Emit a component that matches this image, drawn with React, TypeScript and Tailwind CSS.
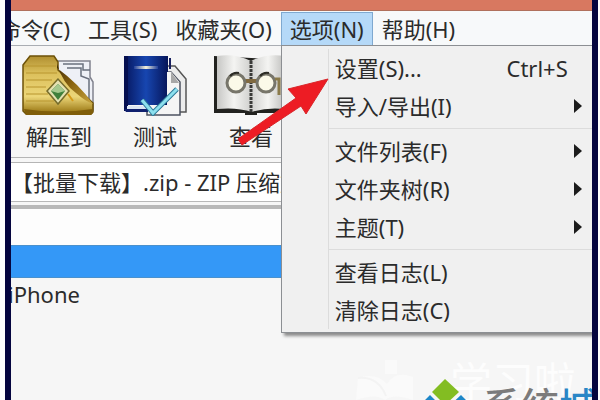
import React from "react";
import clsx from "clsx";

interface Entry {
  label: string;
  shortcut?: string;
  sub?: boolean;
}

const menus = ["命令(C)", "工具(S)", "收藏夹(O)", "选项(N)", "帮助(H)"];

const groups: Entry[][] = [
  [
    { label: "设置(S)...", shortcut: "Ctrl+S" },
    { label: "导入/导出(I)", sub: true },
  ],
  [
    { label: "文件列表(F)", sub: true },
    { label: "文件夹树(R)", sub: true },
    { label: "主题(T)", sub: true },
  ],
  [{ label: "查看日志(L)" }, { label: "清除日志(C)" }],
];

function FolderIcon() {
  return (
    <svg width="76" height="64" viewBox="0 0 76 64" aria-hidden="true">
      <defs>
        <linearGradient id="gold" x1="0" y1="0" x2="0" y2="1">
          <stop offset="0" stopColor="#b08f30" />
          <stop offset="0.3" stopColor="#dcc05c" />
          <stop offset="0.7" stopColor="#ecd678" />
          <stop offset="1" stopColor="#94700c" />
        </linearGradient>
        <linearGradient id="flap" x1="0" y1="0" x2="1" y2="1">
          <stop offset="0" stopColor="#3f2a04" />
          <stop offset="0.45" stopColor="#8a6410" />
          <stop offset="1" stopColor="#c9a640" />
        </linearGradient>
      </defs>
      <path d="M36 9h33v16l3 5v28H40z" fill="#eef0f6" stroke="#81838e" strokeWidth="1.5" />
      <path d="M42 12h20v6h7M46 16h14v8l8 3v22" fill="none" stroke="#6a707e" strokeWidth="1.5" />
      <path d="M2 13 9 4h24l4 6v8l35 33v9l-2 2H5l-3-3z" fill="url(#gold)" stroke="#6d5208" strokeWidth="1.5" />
      <path d="M36 12q6 20 19 29 9 8 17 11-14-20-36-36z" fill="url(#flap)" />
      <path d="M3 14h32M5 21h31M5 28h26M5 35h20M5 42h22M5 49h28" stroke="#b8952e" strokeWidth="1" />
      <path d="M3 57q34 5 69 0v4l-2 2H5z" fill="#805e0a" />
      <path d="M37 27 26 39l11 13 11-13z" fill="#e4e2b2" stroke="#766c2b" strokeWidth="1.5" />
      <path d="m30 39 7-7 7 7-7 9z" fill="#3f803c" />
      <path d="m30 39 7 2 7-2-7-7z" fill="#a5c98e" />
      <path d="m47 42 5 7" stroke="#d59b1a" strokeWidth="2" />
    </svg>
  );
}

function TestIcon() {
  return (
    <svg width="66" height="64" viewBox="0 0 66 64" aria-hidden="true">
      <defs>
        <linearGradient id="cover">
          <stop offset="0" stopColor="#06165e" />
          <stop offset="0.5" stopColor="#1746b0" />
          <stop offset="1" stopColor="#061559" />
        </linearGradient>
        <linearGradient id="shine">
          <stop offset="0" stopColor="#22409a" />
          <stop offset="0.5" stopColor="#f4f2dc" />
          <stop offset="1" stopColor="#22409a" />
        </linearGradient>
      </defs>
      <path d="M44 14h9l11 13v33H44z" fill="#ececec" stroke="#555" strokeWidth="1.5" />
      <path d="M39 20h10l9 10v33H25V49h14z" fill="#f5f5f5" stroke="#4c5260" strokeWidth="1.5" />
      <path d="M49 20v11h9" fill="#bbb" stroke="#777" />
      <path d="M2 4h44v17h-1v32H2z" fill="url(#cover)" />
      <path d="M45 20h4l8 10v32H26V53h19z" fill="#f5f5f5" />
      <path d="M49 20v11h8z" fill="#a8a8a8" />
      <path d="M2 4h4v55H2z" fill="#050f50" />
      <path d="M5 54h22v3H5z" fill="#dce6f3" />
      <path d="M2 57h24v3H4z" fill="#10206e" />
      <path d="M48 6v11" stroke="#18205f" strokeWidth="2" />
      <path d="M12 14h24v3H12z" fill="url(#shine)" />
      <path d="m20 48 11 13 24-24" fill="none" stroke="#2a7898" strokeWidth="5" />
      <path d="m20 48 11 13 24-24" fill="none" stroke="#8de0ee" strokeWidth="3" />
    </svg>
  );
}

function ViewIcon() {
  return (
    <svg width="76" height="64" viewBox="0 0 76 64" aria-hidden="true">
      <defs>
        <linearGradient id="page">
          <stop offset="0" stopColor="#c7c7c5" />
          <stop offset="0.25" stopColor="#f4f4f2" />
          <stop offset="0.5" stopColor="#d0d0ce" />
          <stop offset="0.75" stopColor="#f4f4f2" />
          <stop offset="1" stopColor="#bdbdbb" />
        </linearGradient>
      </defs>
      <path d="M1 4v57h31v2h12v-2h28V8z" fill="#22221f" />
      <path d="M4 4q18-3 34 5Q54 1 72 4v53q-18-2-33 3-15-5-35-3z" fill="url(#page)" />
      <path d="M38 9v51" stroke="#3a3a38" strokeWidth="3" strokeDasharray="3 1" />
      <path d="M32 29h12" stroke="#80693f" strokeWidth="4" />
      <circle cx="23" cy="31" r="9" fill="#fbf9e8" stroke="#77756a" strokeWidth="3" />
      <circle cx="53" cy="31" r="9" fill="#fbf9e8" stroke="#77756a" strokeWidth="3" />
      <path d="M17 24a9 9 0 0 1 9-3M47 24a9 9 0 0 1 9-3" fill="none" stroke="#2c2b24" strokeWidth="2" />
      <path d="M62 27h4v16" fill="none" stroke="#8a7a4a" strokeWidth="3" />
    </svg>
  );
}

const tools = [
  { label: "解压到", icon: <FolderIcon /> },
  { label: "测试", icon: <TestIcon /> },
  { label: "查看", icon: <ViewIcon /> },
];

function Dropdown() {
  return (
    <div className="absolute left-0 top-full z-10 flex w-[320px] flex-col border border-[#8c8f93] bg-[#f0f0f0] py-[3px] shadow-[3px_3px_3px_#00000070]">
      {groups.map((group, index) => (
        <div
          key={index}
          className={clsx(
            "ml-[46px] flex flex-col border-l border-[#dcdcdc]",
            index > 0 && "border-t pt-[3px]",
            index < groups.length - 1 && "pb-[3px]",
          )}
        >
          {group.map((entry) => (
            <button
              key={entry.label}
              type="button"
              className="flex h-[38px] items-center justify-between pl-1.5 pr-[18px] text-left whitespace-nowrap"
            >
              <span>{entry.label}</span>
              {entry.shortcut && <span className="mr-3.5">{entry.shortcut}</span>}
              {entry.sub && (
                <svg width="8" height="14" viewBox="0 0 8 14" aria-hidden="true">
                  <path d="M0 0v14l8-7z" fill="#1c1c1c" />
                </svg>
              )}
            </button>
          ))}
        </div>
      ))}
    </div>
  );
}

function Watermark() {
  return (
    <div className="absolute inset-x-0 bottom-0 h-10 overflow-hidden">
      <div className="absolute right-4 top-0 text-[42px] leading-[44px] text-[#fdfdfd]">学习啦</div>
      <svg className="absolute right-[172px] top-0" width="66" height="40" viewBox="0 0 66 40" aria-hidden="true">
        <path d="M31 0h12v14H31zM4 18q18-6 29 6 8-14 26-7v23q-20-7-28 0-9-7-29 0z" fill="#fafafa" />
        <path d="M4 18q20-2 28 18" fill="none" stroke="#f3f3f3" strokeWidth="2" />
      </svg>
      <svg className="absolute right-[118px] top-[18px]" width="58" height="22" viewBox="0 0 58 22" aria-hidden="true">
        <path d="M29 1 43 14 29 27 16 14z" fill="#83bd22" />
        <path d="m14 17 13 13H1zM45 17l13 13H31z" fill="#1c86c8" />
      </svg>
      <div className="absolute left-[472px] top-[26px] text-[38px] leading-[38px] font-medium whitespace-nowrap text-[#7b7b7b]">
        系统<span className="text-[#2a86c6]">城</span>
      </div>
    </div>
  );
}

export default function App() {
  return (
    <div className="flex min-h-screen bg-white pl-[5px] pr-0.5 font-['Noto_Sans','Noto_Sans_CJK_SC',sans-serif] text-[22px] leading-[28px] text-[#2b2b2b]">
      <div className="relative flex min-w-0 flex-1 flex-col overflow-hidden border-x-6 border-[#05053f] bg-[#f6f6f6]">
        <div className="h-[11px] border-b border-[#b0705c] bg-[#d87860]" />
        <nav className="flex h-[35px] border-b border-[#a9adb3] bg-[#f7f9fa] pt-px">
          <div className="-ml-[21px] flex">
            {menus.map((menu) => {
              const open = menu === "选项(N)";
              return (
                <div key={menu} className="relative flex">
                  <button
                    type="button"
                    className={clsx(
                      "border-x border-t px-2 whitespace-nowrap",
                      open ? "border-[#7fa9d0] bg-[#b5d9f8]" : "border-transparent",
                    )}
                  >
                    {menu}
                  </button>
                  {open && <Dropdown />}
                </div>
              );
            })}
          </div>
        </nav>
        <div className="flex h-[111px] pt-1.5">
          {tools.map((tool) => (
            <button key={tool.label} type="button" className="flex w-24 shrink-0 flex-col items-center gap-1.5">
              {tool.icon}
              <span>{tool.label}</span>
            </button>
          ))}
        </div>
        <div className="h-1.5 border-y border-[#b5b5b5]" />
        <div className="flex h-[38px] items-center bg-white whitespace-nowrap">【批量下载】.zip - ZIP 压缩文件</div>
        <div className="h-2 border-t border-b-4 border-[#b8b8b8]" />
        <div className="h-9 bg-[#fdfdfd]" />
        <div className="h-[33px] border-y border-[#4a91cd] bg-[#3498f7]" />
        <div className="-ml-[3px] flex h-8 items-center">iPhone</div>
        <Watermark />
        <svg className="absolute left-[226px] top-[76px] z-20" width="94" height="70" viewBox="0 0 94 70" aria-hidden="true">
          <path d="M91 3 51 13l8 9L1 63l4 6 59-39 5 8z" fill="#ed1c24" stroke="#d92529" />
        </svg>
      </div>
    </div>
  );
}
